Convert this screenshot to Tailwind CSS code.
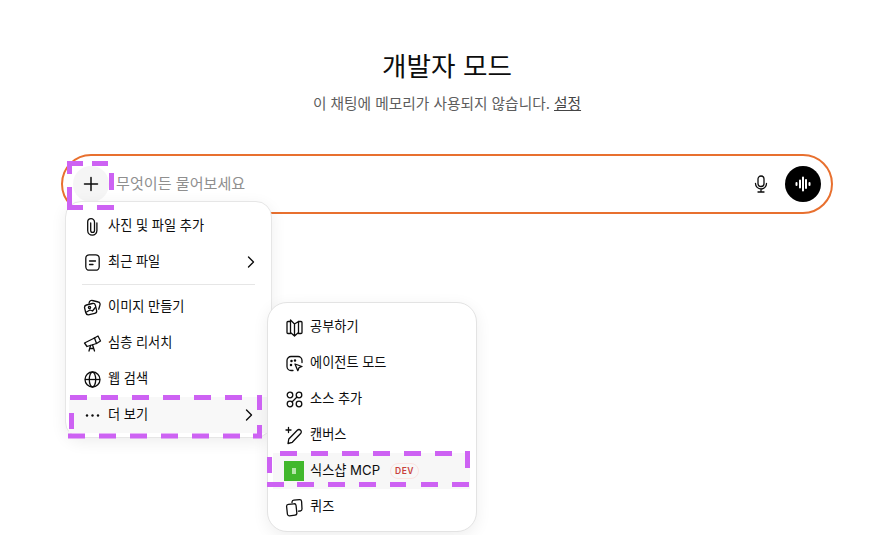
<!DOCTYPE html>
<html lang="ko">
<head>
  <meta charset="UTF-8" />
  <title>개발자 모드</title>
  <script src="https://cdn.jsdelivr.net/npm/@tailwindcss/browser@4"></script>
</head>
<body class="relative w-[876px] h-[535px] overflow-hidden bg-white text-[#0d0d0d] font-['Inter','Noto_Sans_CJK_KR',sans-serif]">

<div class="ml-[61px] w-[772px]">
  <!-- Heading -->
  <div class="flex flex-col items-center pt-[46px]">
    <h1 class="text-[26.6px] leading-[40px] font-normal">개발자 모드</h1>
    <p class="mt-[7px] text-[14.7px] leading-[22px] text-[#5d5d5d]">이 채팅에 메모리가 사용되지 않습니다. <span class="underline text-[#444]">설정</span></p>
  </div>

  <!-- Composer -->
  <div class="mt-[39px] h-[60px] rounded-[30px] border-2 border-[#e8702f] flex items-center pl-[10px] pr-[10px]">
    <div class="w-9 h-9 rounded-full bg-[#f5f5f5] flex items-center justify-center">
      <svg width="18" height="18" viewBox="0 0 18 18" fill="none" stroke="#0d0d0d" stroke-width="1.500" stroke-linecap="round"><path d="M9 2.500v13M2.500 9h13"/></svg>
    </div>
    <span class="ml-[7px] text-[15.1px] text-[#8f8f8f]">무엇이든 물어보세요</span>
    <svg class="ml-auto" width="20" height="20" viewBox="0 0 20 20" fill="none" stroke="#0d0d0d" stroke-width="1.300" stroke-linecap="round"><rect x="7" y="2" width="6" height="10.500" rx="3"/><path d="M4.500 9.500a5.500 5.500 0 0 0 11 0M10 15v3M7 18h6"/></svg>
    <div class="ml-[14px] w-9 h-9 rounded-full bg-black flex items-center justify-center">
      <svg width="20" height="20" viewBox="0 0 20 20" fill="none" stroke="#fff" stroke-width="2" stroke-linecap="round"><path d="M3.500 9v2M7 6.500v7M10 3.500v13M13 6v8M16.500 9v2"/></svg>
    </div>
  </div>
</div>

<!-- Main menu -->
<div class="absolute left-[65px] top-[201px] w-[207px] h-[237px] py-1.5 bg-white rounded-2xl border border-[#e6e6e6] shadow-[0_4px_16px_rgba(0,0,0,0.07)] text-[13.2px]">
  <div class="h-9 flex items-center pl-[17px] pr-[15px] gap-[6px]">
    <svg width="19" height="19" viewBox="0 0 19 19" fill="none" stroke="#0d0d0d" stroke-width="1.300" stroke-linecap="round"><path d="M7.700 6v7.500a1.900 1.900 0 0 0 3.800 0V5a3.400 3.400 0 0 0-6.800 0v8.600a4.600 4.600 0 0 0 9.200 0V6"/></svg>
    <span>사진 및 파일 추가</span>
  </div>
  <div class="h-9 flex items-center pl-[17px] pr-[15px] gap-[6px]">
    <svg width="19" height="19" viewBox="0 0 19 19" fill="none" stroke="#0d0d0d" stroke-width="1.300" stroke-linecap="round"><rect x="2.800" y="1.800" width="13.400" height="15.400" rx="3.500"/><path d="M6.500 8h6M6.500 11.500h3.500"/></svg>
    <span>최근 파일</span>
    <svg class="ml-auto" width="10" height="12" viewBox="0 0 10 12" fill="none" stroke="#0d0d0d" stroke-width="1.400" stroke-linecap="round" stroke-linejoin="round"><path d="M2.500 1 7.500 6l-5 5"/></svg>
  </div>
  <div class="h-px mx-4 my-[4px] bg-[#e6e6e6]"></div>
  <div class="h-9 flex items-center pl-[17px] pr-[15px] gap-[6px]">
    <svg width="19" height="19" viewBox="0 0 19 19" fill="none" stroke="#0d0d0d" stroke-width="1.300" stroke-linecap="round" stroke-linejoin="round"><path d="M1.500 9.500a2.500 2.500 0 0 1 1.900-2.500l6-1.500a2.500 2.500 0 0 1 3 1.800l1.200 5a2.500 2.500 0 0 1-1.800 3l-5.500 1.400a3 3 0 0 1-3.600-2.200z"/><path d="M6 5.200l.3-1a2.400 2.400 0 0 1 3-1.700l6 1.500a2.300 2.300 0 0 1 1.600 3.200l-1.200 4"/><circle cx="6.500" cy="9.500" r="1.100"/><path d="M3.500 14l3.500-2 2.500 1 2.800-3.500"/></svg>
    <span>이미지 만들기</span>
  </div>
  <div class="h-9 flex items-center pl-[17px] pr-[15px] gap-[6px]">
    <svg width="19" height="19" viewBox="0 0 19 19" fill="none" stroke="#0d0d0d" stroke-width="1.300" stroke-linecap="round" stroke-linejoin="round"><path d="M1.500 9 11.500 4l2 5.500-9.500 3z"/><path d="M11 4.200 15 2l2.500 5-4 2.500M7.500 11.500 6 17M9.500 10.800l2 6.200M6.800 14.500h3.600"/></svg>
    <span>심층 리서치</span>
  </div>
  <div class="h-9 flex items-center pl-[17px] pr-[15px] gap-[6px]">
    <svg width="19" height="19" viewBox="0 0 19 19" fill="none" stroke="#0d0d0d" stroke-width="1.300"><circle cx="9.500" cy="9.500" r="7.500"/><ellipse cx="9.500" cy="9.500" rx="3.200" ry="7.500"/><path d="M2 9.500h15"/></svg>
    <span>웹 검색</span>
  </div>
  <div class="h-9 flex items-center pl-[14px] pr-[14px] gap-[6px] bg-[#f8f8f8] mx-[3px]">
    <svg width="19" height="19" viewBox="0 0 19 19" fill="#0d0d0d"><circle cx="4" cy="9.500" r="1.200"/><circle cx="9.500" cy="9.500" r="1.200"/><circle cx="15" cy="9.500" r="1.200"/></svg>
    <span>더 보기</span>
    <svg class="ml-auto" width="10" height="12" viewBox="0 0 10 12" fill="none" stroke="#0d0d0d" stroke-width="1.400" stroke-linecap="round" stroke-linejoin="round"><path d="M2.500 1 7.500 6l-5 5"/></svg>
  </div>
</div>

<!-- Sub menu -->
<div class="absolute left-[267px] top-[302px] w-[210px] h-[230px] py-1.5 bg-white rounded-[20px] border border-[#e3e3e3] shadow-[0_4px_16px_rgba(0,0,0,0.07)] text-[13.2px]">
  <div class="h-9 flex items-center pl-[17px] gap-[6px]">
    <svg width="19" height="19" viewBox="0 0 19 19" fill="none" stroke="#0d0d0d" stroke-width="1.300" stroke-linecap="round" stroke-linejoin="round"><path d="M5.500 3.500H3a1 1 0 0 0-1 1v10a1 1 0 0 0 1 1h2.500M13.500 3.500H16a1 1 0 0 1 1 1v10a1 1 0 0 1-1 1h-2.500"/><path d="M9.500 6 5.500 2v12.500l4 3.500zM9.500 6l4-2.500v11l-4 3.500"/></svg>
    <span>공부하기</span>
  </div>
  <div class="h-9 flex items-center pl-[17px] gap-[6px]">
    <svg width="19" height="19" viewBox="0 0 19 19" fill="none" stroke="#0d0d0d" stroke-width="1.300" stroke-linecap="round" stroke-linejoin="round"><path d="M8 16.500H6a4 4 0 0 1-4-4v-6a4 4 0 0 1 4-4h7a4 4 0 0 1 4 4v2"/><path d="M10 10l7 2.500-3 1.200-1.200 3z"/><circle cx="6.500" cy="7" r=".6"/><circle cx="10" cy="6.500" r=".6"/><circle cx="6" cy="11" r=".6"/></svg>
    <span>에이전트 모드</span>
  </div>
  <div class="h-9 flex items-center pl-[17px] gap-[6px]">
    <svg width="19" height="19" viewBox="0 0 19 19" fill="none" stroke="#0d0d0d" stroke-width="1.300"><circle cx="5" cy="5" r="2.800"/><circle cx="14" cy="5" r="2.800"/><circle cx="5" cy="14" r="2.800"/><circle cx="14" cy="14" r="2.800"/><path d="M12 7l-5 5"/></svg>
    <span>소스 추가</span>
  </div>
  <div class="h-9 flex items-center pl-[17px] gap-[6px]">
    <svg width="19" height="19" viewBox="0 0 19 19" fill="none" stroke="#0d0d0d" stroke-width="1.300" stroke-linecap="round" stroke-linejoin="round"><path d="M3 17.500l.8-4.500 8.500-8.800a2.300 2.300 0 0 1 3.300 3.300l-8.300 8.800zM3.500 1.500v5M1 4h5"/></svg>
    <span>캔버스</span>
  </div>
  <div class="h-9 flex items-center pl-[11px] ml-[5px] mr-[6px] bg-[#f7f7f7]">
    <div class="w-5 h-5 bg-[#41b82c] flex items-center justify-center">
      <div class="w-[4px] h-[6px] bg-[#b5e6a9]"></div>
    </div>
    <span class="ml-[6px]">식스샵 MCP</span>
    <span class="ml-[10px] w-[29px] h-[16px] rounded-full border border-[#fbe3e1] flex items-center justify-center text-[8.5px] font-semibold tracking-[0.5px] text-[#c9403a]">DEV</span>
  </div>
  <div class="h-9 flex items-center pl-[17px] gap-[6px]">
    <svg width="19" height="19" viewBox="0 0 19 19" fill="none" stroke="#0d0d0d" stroke-width="1.300" stroke-linejoin="round" stroke-linecap="round"><rect x="2" y="6" width="9.500" height="11.500" rx="2" transform="rotate(-6 7 12)"/><path d="M7 4.500V4a2 2 0 0 1 1.800-1.800l5.700-.5a2 2 0 0 1 2.100 1.800l.4 7.500a2 2 0 0 1-1.800 2l-1.700.2"/></svg>
    <span>퀴즈</span>
  </div>
</div>

<!-- Dashed highlight annotations -->
<svg class="absolute inset-0 pointer-events-none" width="876" height="535" fill="none" stroke="#cd62f3" stroke-width="5">
  <path d="M67 163.500h16M92 163.500h16M67 207.500h16M97 207.500h17M69.500 161v13M69.500 187v23M111.500 173v17"/>
  <path d="M70 397.500h17M101 397.500h17M132 397.500h17M163 397.500h17M194 397.500h17M225 397.500h17M257 397.500h5M68 436h17M99 436h17M130 436h17M161 436h17M192 436h17M223 436h17M253 436h9M71.500 413v16M259.500 395v15M259.500 425v13"/>
  <path d="M280 453.500h17M311 453.500h17M342 453.500h17M373 453.500h17M404 453.500h17M435 453.500h17M465 453.500h5M267 484.500h17M297 484.500h17M328 484.500h17M359 484.500h17M390 484.500h16M421 484.500h17M452 484.500h17M269.500 457v16M467.500 452v16"/>
</svg>

</body>
</html>
